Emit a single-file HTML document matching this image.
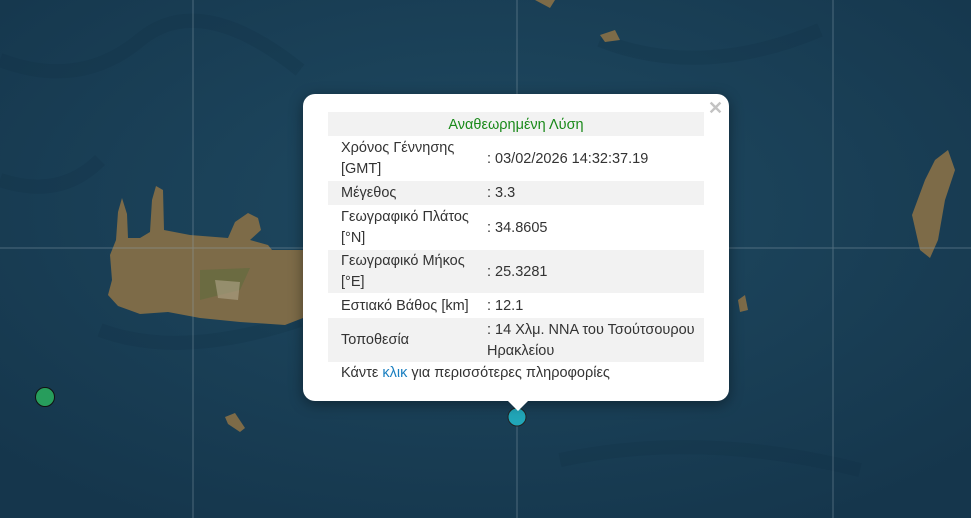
<!DOCTYPE html>
<html><head><meta charset="utf-8"><style>
html,body{margin:0;padding:0;width:971px;height:518px;overflow:hidden;background:#173a52;font-family:"Liberation Sans","DejaVu Sans",sans-serif}
svg.map{position:absolute;left:0;top:0}
.pop{position:absolute;left:303px;top:94px;width:426px;height:307px;background:#fff;border-radius:12px;box-shadow:0 3px 14px rgba(0,0,0,.4)}
.tip{position:absolute;left:507px;top:400px;width:0;height:0;border-left:11px solid transparent;border-right:11px solid transparent;border-top:11px solid #fff}
.close{position:absolute;left:708px;top:98px;color:#c3c3c3;font:bold 18px "Liberation Sans",sans-serif}
table{position:absolute;left:328px;top:112px;width:376px;border-collapse:collapse;font-size:14.5px;color:#333;line-height:21px}
td{padding:1px 0 0 13px;vertical-align:middle}
tr.g{background:#f2f2f2}
td.v{padding-left:6px}
.hd{color:#1a8a1a;text-align:center;height:22px;padding:2px 0 0 0}
.lk{position:absolute;left:341px;top:365px;font-size:14.5px;color:#333}
.lk span{color:#1a7fc0}
</style></head><body>
<svg class="map" width="971" height="518">
<defs><radialGradient id="sea" cx="50%" cy="40%" r="70%"><stop offset="0" stop-color="#1f4a62"/><stop offset="1" stop-color="#15364c"/></radialGradient></defs>
<rect width="971" height="518" fill="url(#sea)"/>
<path d="M0 60 Q80 90 140 40 T300 70 M0 180 Q60 200 100 160 M600 40 Q700 80 820 30 M560 460 Q700 430 860 470 M100 330 Q180 360 300 320" stroke="#0f2c40" stroke-width="14" fill="none" opacity=".2"/>
<g fill="#7d6b48">
<path d="M110 255 L116 240 L118 212 L122 198 L127 214 L128 238 L140 238 L150 232 L152 200 L156 186 L163 190 L164 230 L190 235 L228 238 L235 222 L248 213 L258 218 L261 230 L250 240 L268 245 L272 250 L303 250 L303 318 L285 325 L240 322 L200 318 L168 312 L140 314 L118 306 L108 295 L112 280 Z"/>
<path d="M912 215 L925 180 L935 160 L948 150 L955 170 L945 200 L938 240 L930 258 L920 250 Z"/>
<path d="M225 417 L235 413 L245 428 L240 432 L228 424 Z"/>
<path d="M535 0 L555 0 L550 8 Z"/>
<path d="M600 35 L615 30 L620 40 L605 42 Z"/>
<path d="M738 300 L745 295 L748 310 L740 312 Z"/>
</g>
<path d="M200 270 L250 268 L240 290 L200 300 Z" fill="#5f6a3e" opacity=".6"/>
<path d="M215 280 L240 282 L238 300 L218 298 Z" fill="#b0a58a" opacity=".6"/>
<g stroke="#8fa3b0" stroke-width="1" opacity=".45">
<line x1="193" y1="0" x2="193" y2="518"/><line x1="517" y1="0" x2="517" y2="518"/><line x1="833" y1="0" x2="833" y2="518"/><line x1="0" y1="248" x2="971" y2="248"/>
</g>
<circle cx="45" cy="397" r="9.5" fill="#279d5c" stroke="#111" stroke-width="1"/>
<circle cx="517" cy="417" r="9" fill="#21a6b8" stroke="#222" stroke-width="1"/>
</svg>
<div class="pop"></div><div class="tip"></div>
<div class="close">✕</div>
<table>
<tr class="g"><td colspan="2" class="hd">Αναθεωρημένη Λύση</td></tr>
<tr style="height:45px"><td style="width:140px">Χρόνος Γέννησης<br>[GMT]</td><td class="v">: 03/02/2026 14:32:37.19</td></tr>
<tr class="g" style="height:24px"><td>Μέγεθος</td><td class="v">: 3.3</td></tr>
<tr style="height:45px"><td>Γεωγραφικό Πλάτος<br>[°N]</td><td class="v">: 34.8605</td></tr>
<tr class="g" style="height:43px"><td>Γεωγραφικό Μήκος<br>[°E]</td><td class="v">: 25.3281</td></tr>
<tr style="height:25px"><td>Εστιακό Βάθος [km]</td><td class="v">: 12.1</td></tr>
<tr class="g" style="height:44px"><td>Τοποθεσία</td><td class="v">: 14 Χλμ. ΝΝΑ του Τσούτσουρου Ηρακλείου</td></tr>
</table>
<div class="lk">Κάντε <span>κλικ</span> για περισσότερες πληροφορίες</div>
</body></html>
